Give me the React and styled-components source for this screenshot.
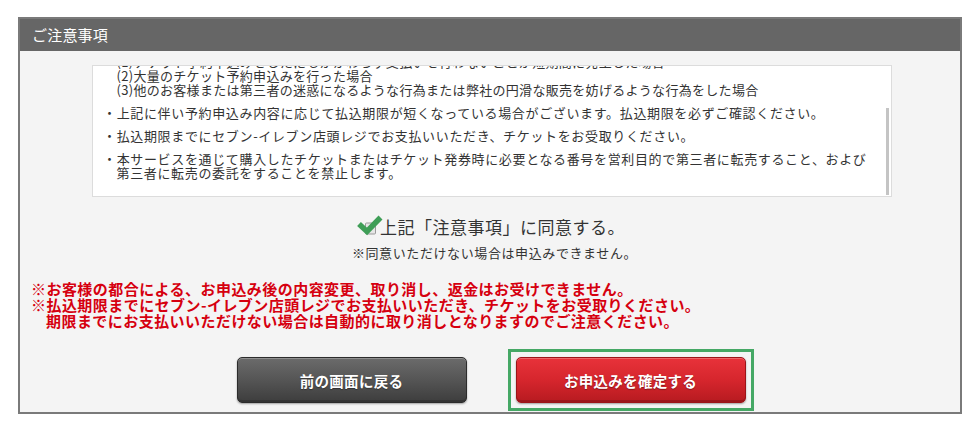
import React, { useLayoutEffect, useRef } from "react";
import styled, { createGlobalStyle } from "styled-components";

const Global = createGlobalStyle`
  html, body { margin: 0; padding: 0; background: #fff; }
  body { font-family: "Noto Sans CJK JP", "Noto Sans", sans-serif; color: #333; }
`;

const Panel = styled.section`
  width: 940px;
  margin: 17px 0 0 18px;
  border: 2px solid #7a7a7a;
  background: #f4f4f4;
`;

const Header = styled.h2`
  margin: 0;
  height: 32px;
  padding-left: 12px;
  background: #666;
  color: #fff;
  font-size: 15px;
  font-weight: normal;
  line-height: 32px;
  letter-spacing: 0.2px;
`;

const Body = styled.div`
  display: flex;
  flex-direction: column;
  padding: 14px 0 9px;
`;

const ScrollFrame = styled.div`
  box-sizing: border-box;
  display: flex;
  width: 800px;
  height: 132px;
  margin-left: 72px;
  background: #fff;
  border: 1px solid #dcdcdc;
`;

const ScrollContent = styled.div`
  flex: 1;
  overflow: hidden;
  padding: 0 10px 16px 10px;
`;

const ScrollTrack = styled.div`
  display: flex;
  flex-direction: column;
  justify-content: flex-end;
  width: 3px;
  margin-right: 2px;
  padding-bottom: 1px;
`;

const Thumb = styled.div`
  height: 87px;
  background: #c4c4c4;
`;

const NoteList = styled.ul`
  list-style: none;
  margin: 0;
  padding: 8px 0 0;
  font-size: 13px;
  letter-spacing: 0.65px;
  line-height: 14px;
  color: #333;
`;

const NoteItem = styled.li`
  padding-left: 13.5px;
  text-indent: -13.5px;
  & + & { margin-top: 9px; }
`;

const SubList = styled.div`
  text-indent: 0;
  margin-bottom: 2px;
  line-height: 14px;
  letter-spacing: 0.3px;
  white-space: nowrap;
`;

const AgreeRow = styled.label`
  display: flex;
  align-items: center;
  justify-content: center;
  margin-top: 17px;
  height: 24px;
  font-size: 17px;
  letter-spacing: 0.5px;
  color: #333;
  padding-left: 2px;
`;

const CheckIcon = styled.svg`
  width: 26px;
  height: 22px;
  margin-right: -3px;
  margin-top: -3px;
  flex-shrink: 0;
`;

const SubNote = styled.p`
  margin: 6px 0 0;
  text-align: center;
  font-size: 13px;
  letter-spacing: 0.6px;
  line-height: 18px;
  color: #333;
  padding-left: 9px;
`;

const Warning = styled.div`
  margin-top: 19px;
  padding-left: 11px;
  color: #d6000f;
  font-size: 15px;
  font-weight: bold;
  letter-spacing: 0.45px;
  line-height: 16px;
`;

const WarnLine = styled.p`
  margin: 0;
  padding-left: ${(p) => (p.$indent ? "15px" : "0")};
`;

const ButtonRow = styled.div`
  display: flex;
  justify-content: center;
  gap: 49px;
  margin-top: 28px;
  padding-left: 2px;
`;

const Highlight = styled.div`
  display: flex;
  outline: 3px solid #45a865;
  outline-offset: 5px;
`;

const Button = styled.button`
  box-sizing: border-box;
  width: 230px;
  height: 46px;
  border-radius: 5px;
  font-family: "Noto Sans CJK JP", sans-serif;
  font-size: 14.5px;
  font-weight: bold;
  letter-spacing: 0.3px;
  color: #fff;
  cursor: pointer;
  text-shadow: 0 1px 1px rgba(0, 0, 0, 0.35);
  border: 1px solid ${(p) => (p.$primary ? "#9c1418" : "#2c2c2c")};
  background: ${(p) =>
    p.$primary
      ? "linear-gradient(#e8323a 0%, #d6262d 50%, #b71b20 100%)"
      : "linear-gradient(#6b6b6b 0%, #555 50%, #3d3d3d 100%)"};
  box-shadow: inset 0 1px 0 rgba(255, 255, 255, 0.25),
    inset 0 -2px 0 rgba(0, 0, 0, 0.15), 0 1px 2px rgba(0, 0, 0, 0.35);
`;

function Check() {
  return (
    <CheckIcon viewBox="0 0 26 22" aria-hidden="true">
      <rect x="8.5" y="9" width="10" height="11" rx="1" fill="#e6e6e6" stroke="#9a9a9a" />
      <path d="M2 10 L10 17.5 L23.5 3.5" fill="none" stroke="#3f9e57" strokeWidth="5.5" strokeLinejoin="miter" />
    </CheckIcon>
  );
}

export default function App() {
  const ref = useRef(null);
  useLayoutEffect(() => {
    if (ref.current) ref.current.scrollTop = ref.current.scrollHeight;
  }, []);
  return (
    <>
      <Global />
      <Panel>
        <Header>ご注意事項</Header>
        <Body>
          <ScrollFrame>
            <ScrollContent ref={ref}>
              <NoteList>
                <NoteItem>・お申込み内容を必ずご確認のうえ、お申込みください。</NoteItem>
                <NoteItem>
                  ・以下のいずれかに該当する場合、予約申込みの受付を制限させていただく場合がございます。
                  <SubList>
                    (1)チケット予約申込みをしたにもかかわらず支払いを行わないことが短期間に発生した場合
                    <br />
                    (2)大量のチケット予約申込みを行った場合
                    <br />
                    (3)他のお客様または第三者の迷惑になるような行為または弊社の円滑な販売を妨げるような行為をした場合
                  </SubList>
                </NoteItem>
                <NoteItem>・上記に伴い予約申込み内容に応じて払込期限が短くなっている場合がございます。払込期限を必ずご確認ください。</NoteItem>
                <NoteItem>・払込期限までにセブン-イレブン店頭レジでお支払いいただき、チケットをお受取りください。</NoteItem>
                <NoteItem>
                  ・本サービスを通じて購入したチケットまたはチケット発券時に必要となる番号を営利目的で第三者に転売すること、および
                  <br />
                  第三者に転売の委託をすることを禁止します。
                </NoteItem>
              </NoteList>
            </ScrollContent>
            <ScrollTrack>
              <Thumb />
            </ScrollTrack>
          </ScrollFrame>

          <AgreeRow>
            <Check />
            上記「注意事項」に同意する。
          </AgreeRow>
          <SubNote>※同意いただけない場合は申込みできません。</SubNote>

          <Warning>
            <WarnLine>※お客様の都合による、お申込み後の内容変更、取り消し、返金はお受けできません。</WarnLine>
            <WarnLine>※払込期限までにセブン-イレブン店頭レジでお支払いいただき、チケットをお受取りください。</WarnLine>
            <WarnLine $indent>期限までにお支払いいただけない場合は自動的に取り消しとなりますのでご注意ください。</WarnLine>
          </Warning>

          <ButtonRow>
            <Button type="button">前の画面に戻る</Button>
            <Highlight>
              <Button type="button" $primary>
                お申込みを確定する
              </Button>
            </Highlight>
          </ButtonRow>
        </Body>
      </Panel>
    </>
  );
}
